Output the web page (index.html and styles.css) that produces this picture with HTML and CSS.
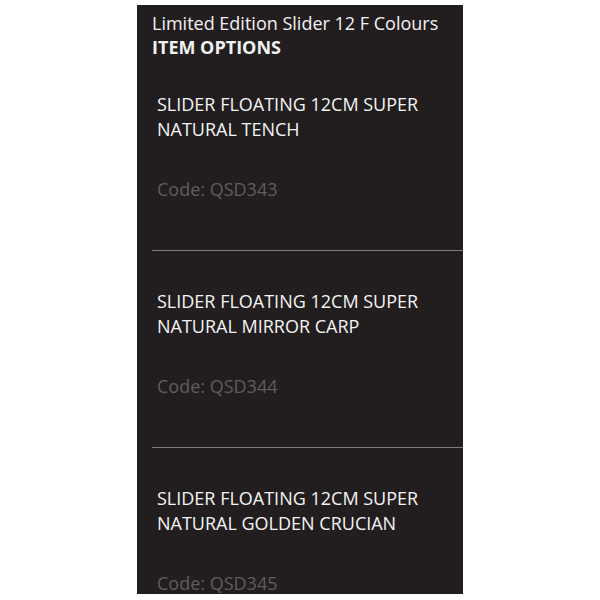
FILE: index.html
```html
<!DOCTYPE html>
<html>
<head>
<meta charset="utf-8">
<link rel="stylesheet" href="styles.css">
</head>
<body>
<div class="panel">
  <div class="header">
    <div class="title">Limited Edition Slider 12 F Colours</div>
    <div class="subtitle">ITEM OPTIONS</div>
  </div>
  <div class="options">
    <div class="option first">
      <div class="name">SLIDER FLOATING 12CM SUPER<br>NATURAL TENCH</div>
      <div class="code">Code: QSD343</div>
    </div>
    <div class="option">
      <div class="name">SLIDER FLOATING 12CM SUPER<br>NATURAL MIRROR CARP</div>
      <div class="code">Code: QSD344</div>
    </div>
    <div class="option last">
      <div class="name">SLIDER FLOATING 12CM SUPER<br>NATURAL GOLDEN CRUCIAN</div>
      <div class="code">Code: QSD345</div>
    </div>
  </div>
</div>
</body>
</html>
```
FILE: styles.css
```css
html, body {
  margin: 0;
  padding: 0;
  background: #ffffff;
}
body {
  padding: 5px 0 0 137px;
  font-family: "Open Sans", "Liberation Sans", sans-serif;
}
.panel {
  width: 326px;
  height: 589px;
  background: #221e1f;
  overflow: hidden;
  box-sizing: border-box;
}
.header {
  padding: 6px 15px 0 15px;
  color: #f2f2f2;
  font-size: 18px;
  line-height: 24px;
}
.subtitle {
  font-weight: 700;
}
.options {
  margin-top: 33px;
}
.option {
  margin-left: 15px;
  padding: 38px 0 49px 5px;
  border-bottom: 1px solid #7d7b7b;
}
.option.first {
  padding-top: 0;
}
.option.last {
  border-bottom: none;
}
.name {
  color: #f4f4f4;
  font-size: 18px;
  line-height: 25px;
}
.code {
  margin-top: 35px;
  color: #5f5c5c;
  font-size: 18px;
  line-height: 24px;
}
```
